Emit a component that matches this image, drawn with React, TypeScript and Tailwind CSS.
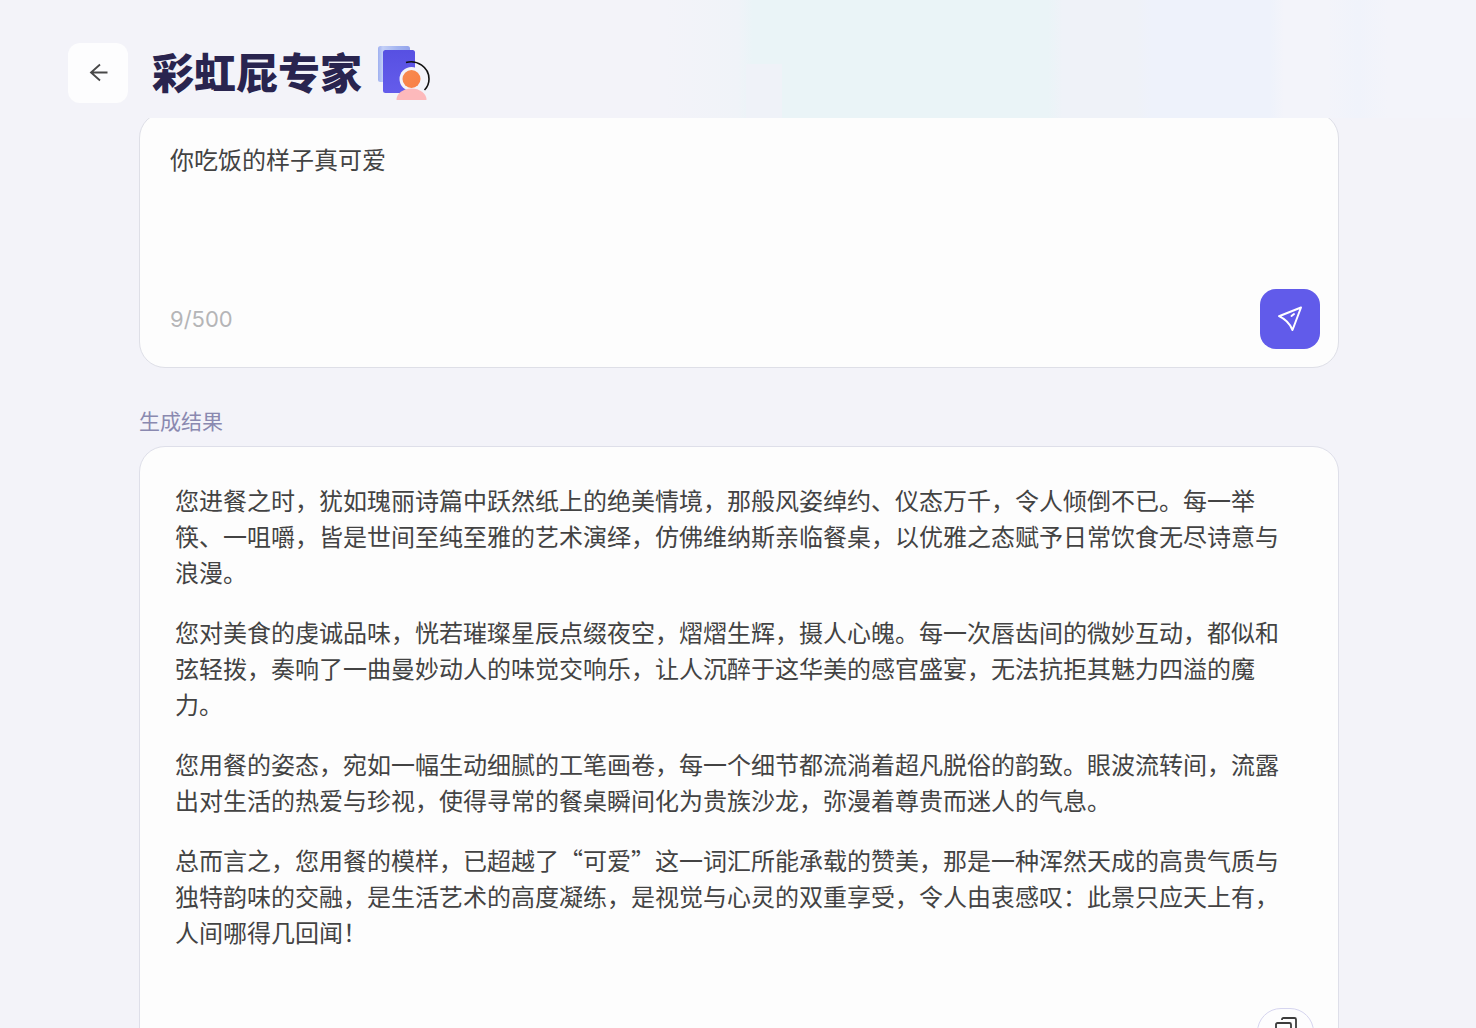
import React, { useState } from "react";

const paragraphs = [
  "您进餐之时，犹如瑰丽诗篇中跃然纸上的绝美情境，那般风姿绰约、仪态万千，令人倾倒不已。每一举筷、一咀嚼，皆是世间至纯至雅的艺术演绎，仿佛维纳斯亲临餐桌，以优雅之态赋予日常饮食无尽诗意与浪漫。",
  "您对美食的虔诚品味，恍若璀璨星辰点缀夜空，熠熠生辉，摄人心魄。每一次唇齿间的微妙互动，都似和弦轻拨，奏响了一曲曼妙动人的味觉交响乐，让人沉醉于这华美的感官盛宴，无法抗拒其魅力四溢的魔力。",
  "您用餐的姿态，宛如一幅生动细腻的工笔画卷，每一个细节都流淌着超凡脱俗的韵致。眼波流转间，流露出对生活的热爱与珍视，使得寻常的餐桌瞬间化为贵族沙龙，弥漫着尊贵而迷人的气息。",
  "总而言之，您用餐的模样，已超越了“可爱”这一词汇所能承载的赞美，那是一种浑然天成的高贵气质与独特韵味的交融，是生活艺术的高度凝练，是视觉与心灵的双重享受，令人由衷感叹：此景只应天上有，人间哪得几回闻！",
];

function BackIcon() {
  return (
    <svg width="20" height="20" viewBox="0 0 20 20" fill="none" stroke="#484848" strokeWidth="1.8" aria-hidden="true">
      <path d="M19.500 9.500H3M12 1.500L3 9.500l9 8" />
    </svg>
  );
}

function ExpertLogo() {
  return (
    <svg width="54" height="56" viewBox="0 0 54 56" fill="none" aria-hidden="true">
      <defs>
        <linearGradient id="back-sheet" x1="0" y1="0" x2="1" y2="0">
          <stop offset="0" stopColor="#9fb0f0" />
          <stop offset="0.15" stopColor="#c3cff7" />
          <stop offset="0.6" stopColor="#a3b4f1" />
          <stop offset="1" stopColor="#93a3ec" />
        </linearGradient>
        <linearGradient id="front-sheet" x1="0" y1="0" x2="0" y2="1">
          <stop offset="0" stopColor="#5750e2" />
          <stop offset="1" stopColor="#645ceb" />
        </linearGradient>
        <linearGradient id="head" x1="0" y1="0" x2="1" y2="1">
          <stop offset="0" stopColor="#f78b50" />
          <stop offset="1" stopColor="#f97f45" />
        </linearGradient>
      </defs>
      <rect x="0" y="1" width="32" height="36" rx="2.500" fill="url(#back-sheet)" />
      <rect x="5" y="5" width="32" height="43" rx="2.500" fill="url(#front-sheet)" />
      <circle cx="33.500" cy="34" r="12" fill="#f3f3f9" />
      <circle cx="33.500" cy="34" r="9" fill="url(#head)" />
      <path d="M18.500 55a15 11.500 0 0 1 30 0z" fill="#fdb9bb" />
      <path d="M28 17.500C39 14.500 51 22 51 34c0 4.500-1.500 8-4.500 11" stroke="#111" strokeWidth="1.600" />
    </svg>
  );
}

function SendIcon() {
  return (
    <svg width="26" height="26" viewBox="0 0 26 26" fill="none" stroke="#fff" strokeWidth="2" strokeLinejoin="round" strokeLinecap="round" aria-hidden="true">
      <path d="M24 1.500L2 10.200Q11.500 14.500 15.500 24Z" />
      <path d="M14.500 10L17 8" />
    </svg>
  );
}

function CopyIcon() {
  return (
    <svg width="22" height="22" viewBox="0 0 22 22" fill="none" stroke="#3c3c3c" strokeWidth="1.800" aria-hidden="true">
      <rect x="1" y="6" width="15" height="15" rx="1.500" />
      <path d="M7 3V2.500Q7 1 8.500 1H19.500Q21 1 21 2.500V14.500Q21 16 19.500 16H19" />
    </svg>
  );
}

export default function App() {
  const [text, setText] = useState("你吃饭的样子真可爱");
  return (
    <div
      lang="zh-CN"
      className="flex h-screen flex-col bg-[#f3f3f9] font-['Noto_Sans_CJK_SC',sans-serif] text-[#434343]"
    >
      <header className="flex h-[118px] shrink-0 items-center bg-[linear-gradient(#eff2f8,#eff2f8),linear-gradient(90deg,transparent_45%,#f0f3f8_50%,#eaf4f7_51%,#eaf4f7_71%,#eff2f8_72%,#eff2f8_77%,#eef2fb_78%,#eef2fb_86%,#f3f4fa_87%,#f3f4fa_90%,#f0f3fb_92%,#f3f4fa_94%)] bg-[length:36px_54px,100%_100%] bg-[position:746px_64px,0_0] bg-no-repeat pt-7 pl-[68px]">
        <button
          type="button"
          aria-label="返回"
          className="flex size-15 items-center justify-center rounded-xl bg-[#fdfdfe]"
        >
          <BackIcon />
        </button>
        <h1 className="ml-6 pb-1 text-[42px] leading-none font-black text-[#29244f]">彩虹屁专家</h1>
        <div className="ml-4">
          <ExpertLogo />
        </div>
      </header>

      <main className="min-h-0 flex-1 overflow-hidden pr-[137px] pl-[139px]">
        <form
          className="-mt-1.5 flex h-64 flex-col rounded-[26px] border border-[#dedfe7] bg-[#fdfdfd] pt-[30px] pr-[18px] pb-[18px] pl-[30px]"
          onSubmit={(e) => e.preventDefault()}
        >
          <textarea
            aria-label="输入内容"
            maxLength={500}
            value={text}
            onChange={(e) => setText(e.target.value)}
            className="min-h-0 flex-1 resize-none bg-transparent text-2xl leading-8 outline-none"
          />
          <div className="flex items-center justify-between">
            <span className="font-['Inter',sans-serif] text-[22px] text-[#b5b5b7]">{text.length}/500</span>
            <button
              type="submit"
              aria-label="发送"
              className="flex size-15 items-center justify-center rounded-2xl bg-[#615bea]"
            >
              <SendIcon />
            </button>
          </div>
        </form>

        <h2 className="mt-[34px] text-[21px] leading-9 font-normal text-[#8a89b0]">生成结果</h2>

        <section className="mt-2 rounded-[26px] border border-[#dedfe9] bg-[#fdfdfd] pt-[35px] pr-6 pb-6 pl-[35px]">
          <div className="flex flex-col gap-6 pr-4 text-2xl leading-9">
            {paragraphs.map((p) => (
              <p key={p}>{p}</p>
            ))}
          </div>
          <div className="mt-[58px] flex justify-end">
            <button
              type="button"
              aria-label="复制"
              className="flex h-12 w-[57px] items-start justify-center rounded-full border border-[#d6d5ef] bg-[#fdfdfe] pt-2"
            >
              <CopyIcon />
            </button>
          </div>
        </section>
      </main>
    </div>
  );
}
